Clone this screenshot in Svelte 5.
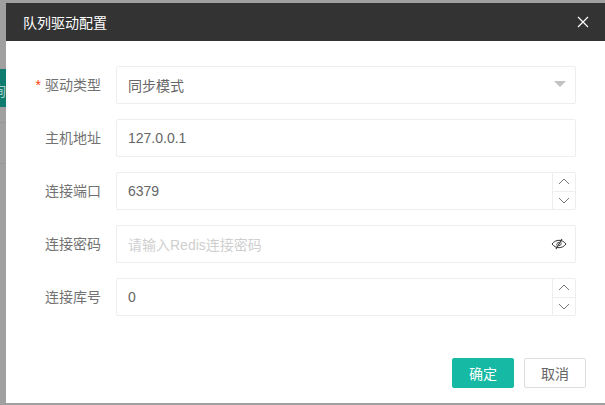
<script>
	let fields = [
		{ label: '驱动类型', value: '同步模式', kind: 'select', required: true },
		{ label: '主机地址', value: '127.0.0.1', kind: 'text' },
		{ label: '连接端口', value: '6379', kind: 'number' },
		{ label: '连接密码', value: '', placeholder: '请输入Redis连接密码', kind: 'password' },
		{ label: '连接库号', value: '0', kind: 'number' }
	];
</script>

<div class="page">
	<div class="behind">
		<div class="tab"><span>询</span></div>
		<div class="line"></div>
		<div class="line second"></div>
	</div>
	<div class="dialog">
		<div class="head">
			<span class="title">队列驱动配置</span>
			<svg class="close" width="12" height="12" viewBox="0 0 12 12">
				<path d="M1 1l10 10M11 1L1 11" stroke="#fff" stroke-width="1.2" fill="none" />
			</svg>
		</div>
		<div class="body">
			{#each fields as f}
				<div class="row">
					<label class="label">
						{#if f.required}<i class="star">*</i>{/if}{f.label}
					</label>
					<div class="box">
						{#if f.value}
							<span class="val">{f.value}</span>
						{:else}
							<span class="ph">{f.placeholder}</span>
						{/if}
						{#if f.kind === 'select'}
							<span class="caret"></span>
						{:else if f.kind === 'number'}
							<div class="steps">
								<div class="step">
									<svg width="12" height="7" viewBox="0 0 12 7"><path d="M1 6l5-5 5 5" stroke="#666" stroke-width="0.9" fill="none" /></svg>
								</div>
								<div class="step down">
									<svg width="12" height="7" viewBox="0 0 12 7"><path d="M1 1l5 5 5-5" stroke="#666" stroke-width="0.9" fill="none" /></svg>
								</div>
							</div>
						{:else if f.kind === 'password'}
							<svg class="eye" width="16" height="12" viewBox="0 0 16 12">
								<path d="M1 6c2-2.600 4.500-3.700 7-3.700S13 3.400 15 6c-2 2.600-4.500 3.700-7 3.700S3 8.600 1 6z" stroke="#333" stroke-width="1" fill="none" />
								<path d="M6 7.500c-.8-1.500.4-3.200 2.200-3.200M10 4.500c.8 1.500-.4 3.200-2.200 3.200" stroke="#333" stroke-width="0.9" fill="none" />
								<path d="M11 1L5 11" stroke="#333" stroke-width="1.100" />
							</svg>
						{/if}
					</div>
				</div>
			{/each}
		</div>
		<div class="foot">
			<button class="btn primary">确定</button>
			<button class="btn">取消</button>
		</div>
	</div>
</div>

<style>
	:global(body) {
		margin: 0;
		overflow: hidden;
	}

	.page {
		position: relative;
		width: 605px;
		height: 405px;
		background: #a0a0a0;
		overflow: hidden;
		padding: 3px 0 0 6px;
		box-sizing: border-box;
		font-family: "Liberation Sans", "Noto Sans CJK SC", sans-serif;
		font-size: 14px;
	}

	/* page behind the overlay, only its left edge shows */
	.behind {
		position: absolute;
		left: 0;
		top: 69px;
		width: 6px;
		overflow: hidden;
	}

	.tab {
		position: relative;
		height: 38px;
		background: #0e7c6e;
	}

	.tab span {
		position: absolute;
		left: -8px;
		top: 11px;
		color: #a8cfc8;
		font-size: 14px;
	}

	.line {
		height: 1px;
		margin-top: 15px;
		background: #979797;
	}

	.line.second {
		margin-top: 40px;
	}

	.dialog {
		position: relative;
		width: 599px;
		height: 400px;
		background: #fff;
	}

	.head {
		height: 38px;
		background: #333;
		display: flex;
		align-items: center;
		justify-content: space-between;
		padding: 0 16px 0 17px;
	}

	.title {
		color: #fff;
		font-size: 14px;
	}

	.body {
		padding: 25px 29px 0 0;
		display: flex;
		flex-direction: column;
		gap: 15px;
	}

	.row {
		display: flex;
		align-items: center;
		gap: 15px;
	}

	.label {
		width: 95px;
		text-align: right;
		color: #727272;
		line-height: 38px;
	}

	.star {
		color: #ff3b00;
		font-style: normal;
		margin-right: 4px;
	}

	.box {
		flex: 1;
		height: 38px;
		box-sizing: border-box;
		border: 1px solid #eee;
		border-radius: 2px;
		display: flex;
		align-items: center;
		justify-content: space-between;
		padding-left: 11px;
		color: #666;
	}

	.ph {
		color: #cfcfcf;
	}

	.caret {
		width: 0;
		height: 0;
		border-style: solid;
		border-width: 6px 6px 0;
		border-color: #c2c2c2 transparent transparent;
		margin-right: 9px;
		margin-top: -2px;
	}

	.steps {
		width: 22px;
		height: 100%;
		border-left: 1px solid #eee;
		display: flex;
		flex-direction: column;
	}

	.step {
		flex: 1;
		display: flex;
		align-items: center;
		justify-content: center;
	}

	.step.down {
		border-top: 1px solid #eee;
	}

	.eye {
		margin-right: 8px;
	}

	.foot {
		position: absolute;
		right: 19px;
		bottom: 15px;
		display: flex;
		gap: 10px;
	}

	.btn {
		width: 62px;
		height: 30px;
		box-sizing: border-box;
		border: 1px solid #dedede;
		border-radius: 2px;
		background: #fff;
		color: #666;
		font: inherit;
		padding: 0;
	}

	.btn.primary {
		background: #16b9a3;
		border-color: #16b9a3;
		color: #fff;
	}
</style>
